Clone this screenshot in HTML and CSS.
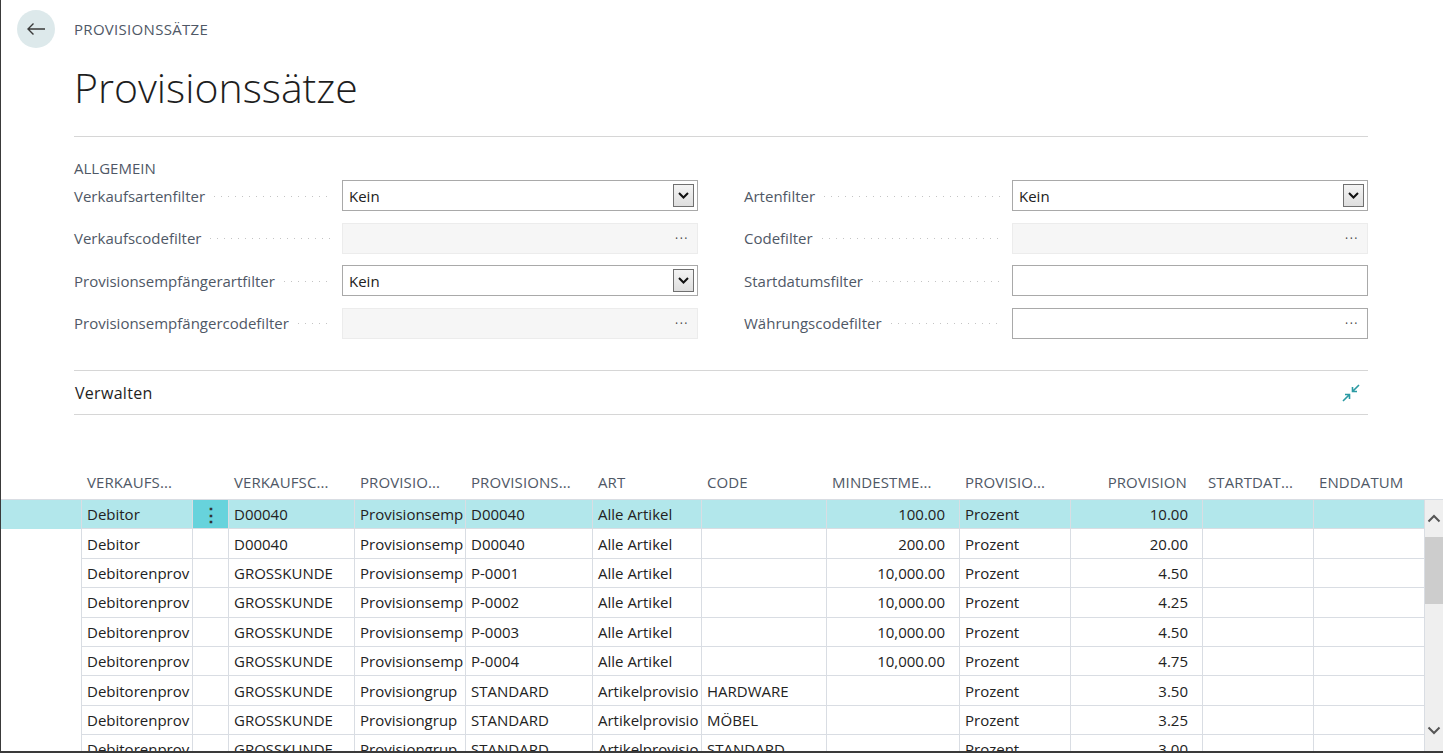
FILE: index.html
```html
<!DOCTYPE html>
<html lang="de">
<head>
<meta charset="utf-8">
<title>Provisionssätze</title>
<link rel="stylesheet" href="styles.css">
</head>
<body>
<div class="app">
  <header class="topbar">
    <button class="back" aria-label="Zurück">
      <svg width="20" height="14" viewBox="0 0 20 14"><path d="M19 7H2M7.5 1.5L2 7l5.5 5.5" fill="none" stroke="#3a3a3a" stroke-width="1.4"/></svg>
    </button>
    <div class="crumb">PROVISIONSSÄTZE</div>
  </header>

  <div class="page">
    <h1 class="title">Provisionssätze</h1>

    <div class="section-title">ALLGEMEIN</div>
    <div class="fields">
      <div class="field">
        <div class="label"><span>Verkaufsartenfilter</span><span class="leader"></span></div>
        <div class="input"><span class="val">Kein</span><span class="dd"><svg width="11" height="7" viewBox="0 0 11 7"><path d="M1 1l4.5 4.5L10 1" fill="none" stroke="#111" stroke-width="2"/></svg></span></div>
      </div>
      <div class="field">
        <div class="label"><span>Artenfilter</span><span class="leader"></span></div>
        <div class="input"><span class="val">Kein</span><span class="dd"><svg width="11" height="7" viewBox="0 0 11 7"><path d="M1 1l4.5 4.5L10 1" fill="none" stroke="#111" stroke-width="2"/></svg></span></div>
      </div>
      <div class="field">
        <div class="label"><span>Verkaufscodefilter</span><span class="leader"></span></div>
        <div class="input disabled"><span class="val"></span><span class="more">···</span></div>
      </div>
      <div class="field">
        <div class="label"><span>Codefilter</span><span class="leader"></span></div>
        <div class="input disabled"><span class="val"></span><span class="more">···</span></div>
      </div>
      <div class="field">
        <div class="label"><span>Provisionsempfängerartfilter</span><span class="leader"></span></div>
        <div class="input"><span class="val">Kein</span><span class="dd"><svg width="11" height="7" viewBox="0 0 11 7"><path d="M1 1l4.5 4.5L10 1" fill="none" stroke="#111" stroke-width="2"/></svg></span></div>
      </div>
      <div class="field">
        <div class="label"><span>Startdatumsfilter</span><span class="leader"></span></div>
        <div class="input"><span class="val"></span></div>
      </div>
      <div class="field">
        <div class="label"><span>Provisionsempfängercodefilter</span><span class="leader"></span></div>
        <div class="input disabled"><span class="val"></span><span class="more">···</span></div>
      </div>
      <div class="field">
        <div class="label"><span>Währungscodefilter</span><span class="leader"></span></div>
        <div class="input"><span class="val"></span><span class="more">···</span></div>
      </div>
    </div>

    <div class="manage">
      <span class="manage-title">Verwalten</span>
      <svg class="collapse" width="20" height="20" viewBox="0 0 20 20"><path d="M2 18L8.5 11.5M4 11.5h4.5V16M18 2l-6.5 6.5M11.5 4v4.5H16" fill="none" stroke="#2b9aa3" stroke-width="1.6"/></svg>
    </div>
  </div>

  <div class="grid">
    <div class="grow head">
      <div class="c sel"></div>
      <div class="c">VERKAUFS...</div>
      <div class="c"></div>
      <div class="c">VERKAUFSC...</div>
      <div class="c">PROVISIO...</div>
      <div class="c">PROVISIONS...</div>
      <div class="c">ART</div>
      <div class="c">CODE</div>
      <div class="c">MINDESTME...</div>
      <div class="c">PROVISIO...</div>
      <div class="c num">PROVISION</div>
      <div class="c">STARTDAT...</div>
      <div class="c">ENDDATUM</div>
    </div>
    <div class="body-wrap">
      <div class="rows">
        <div class="grow row active">
          <div class="c sel"></div><div class="c">Debitor</div><div class="c menu">⋮</div><div class="c">D00040</div><div class="c">Provisionsemp</div><div class="c">D00040</div><div class="c">Alle Artikel</div><div class="c"></div><div class="c num">100.00</div><div class="c">Prozent</div><div class="c num">10.00</div><div class="c"></div><div class="c"></div>
        </div>
        <div class="grow row">
          <div class="c sel"></div><div class="c">Debitor</div><div class="c"></div><div class="c">D00040</div><div class="c">Provisionsemp</div><div class="c">D00040</div><div class="c">Alle Artikel</div><div class="c"></div><div class="c num">200.00</div><div class="c">Prozent</div><div class="c num">20.00</div><div class="c"></div><div class="c"></div>
        </div>
        <div class="grow row">
          <div class="c sel"></div><div class="c">Debitorenprov</div><div class="c"></div><div class="c">GROSSKUNDE</div><div class="c">Provisionsemp</div><div class="c">P-0001</div><div class="c">Alle Artikel</div><div class="c"></div><div class="c num">10,000.00</div><div class="c">Prozent</div><div class="c num">4.50</div><div class="c"></div><div class="c"></div>
        </div>
        <div class="grow row">
          <div class="c sel"></div><div class="c">Debitorenprov</div><div class="c"></div><div class="c">GROSSKUNDE</div><div class="c">Provisionsemp</div><div class="c">P-0002</div><div class="c">Alle Artikel</div><div class="c"></div><div class="c num">10,000.00</div><div class="c">Prozent</div><div class="c num">4.25</div><div class="c"></div><div class="c"></div>
        </div>
        <div class="grow row">
          <div class="c sel"></div><div class="c">Debitorenprov</div><div class="c"></div><div class="c">GROSSKUNDE</div><div class="c">Provisionsemp</div><div class="c">P-0003</div><div class="c">Alle Artikel</div><div class="c"></div><div class="c num">10,000.00</div><div class="c">Prozent</div><div class="c num">4.50</div><div class="c"></div><div class="c"></div>
        </div>
        <div class="grow row">
          <div class="c sel"></div><div class="c">Debitorenprov</div><div class="c"></div><div class="c">GROSSKUNDE</div><div class="c">Provisionsemp</div><div class="c">P-0004</div><div class="c">Alle Artikel</div><div class="c"></div><div class="c num">10,000.00</div><div class="c">Prozent</div><div class="c num">4.75</div><div class="c"></div><div class="c"></div>
        </div>
        <div class="grow row">
          <div class="c sel"></div><div class="c">Debitorenprov</div><div class="c"></div><div class="c">GROSSKUNDE</div><div class="c">Provisiongrup</div><div class="c">STANDARD</div><div class="c">Artikelprovisio</div><div class="c">HARDWARE</div><div class="c num"></div><div class="c">Prozent</div><div class="c num">3.50</div><div class="c"></div><div class="c"></div>
        </div>
        <div class="grow row">
          <div class="c sel"></div><div class="c">Debitorenprov</div><div class="c"></div><div class="c">GROSSKUNDE</div><div class="c">Provisiongrup</div><div class="c">STANDARD</div><div class="c">Artikelprovisio</div><div class="c">MÖBEL</div><div class="c num"></div><div class="c">Prozent</div><div class="c num">3.25</div><div class="c"></div><div class="c"></div>
        </div>
        <div class="grow row">
          <div class="c sel"></div><div class="c">Debitorenprov</div><div class="c"></div><div class="c">GROSSKUNDE</div><div class="c">Provisiongrup</div><div class="c">STANDARD</div><div class="c">Artikelprovisio</div><div class="c">STANDARD</div><div class="c num"></div><div class="c">Prozent</div><div class="c num">3.00</div><div class="c"></div><div class="c"></div>
        </div>
      </div>
      <div class="scrollbar">
        <div class="sb-btn up"><svg width="14" height="9" viewBox="0 0 14 9"><path d="M1.5 7.5L7 2l5.5 5.5" fill="none" stroke="#555" stroke-width="2"/></svg></div>
        <div class="sb-thumb"></div>
        <div class="sb-track"></div>
        <div class="sb-btn down"><svg width="14" height="9" viewBox="0 0 14 9"><path d="M1.5 1.5L7 7l5.5-5.5" fill="none" stroke="#555" stroke-width="2"/></svg></div>
      </div>
    </div>
  </div>
</div>
</body>
</html>
```

FILE: styles.css
```css
* { box-sizing: border-box; }
html, body { margin: 0; padding: 0; }
body {
  font-family: "Open Sans", "Noto Sans", sans-serif;
  color: #212121;
  background: #fff;
  overflow: hidden;
}
.app {
  width: 1443px;
  height: 753px;
  border-left: 1px solid #3a3a3a;
  border-bottom: 2px solid #3a3a3a;
  display: flex;
  flex-direction: column;
  overflow: hidden;
}
.topbar {
  height: 58px;
  display: flex;
  align-items: center;
  padding-left: 16px;
  flex: none;
}
.back {
  width: 38px;
  height: 38px;
  border-radius: 50%;
  border: none;
  background: #dde9eb;
  display: flex;
  align-items: center;
  justify-content: center;
  padding: 0;
  margin-right: 19px;
}
.crumb {
  font-size: 15px;
  letter-spacing: 0.3px;
  color: #4f5866;
}
.page {
  padding: 0 75px 0 73px;
  flex: none;
}
.title {
  margin: 4px 0 0;
  font-size: 41px;
  font-weight: 300;
  line-height: 50px;
  padding-bottom: 24px;
  border-bottom: 1px solid #d6d6d6;
  color: #1e1e1e;
}
.section-title {
  margin-top: 21px;
  font-size: 15px;
  line-height: 20px;
  color: #4f5866;
}
.fields {
  margin-top: 2px;
  display: grid;
  grid-template-columns: 1fr 1fr;
  column-gap: 46px;
  row-gap: 11.5px;
}
.field {
  display: grid;
  grid-template-columns: 1fr 356px;
  height: 31px;
  align-items: center;
}
.label {
  display: flex;
  align-items: center;
  font-size: 15px;
  color: #4f5866;
  white-space: nowrap;
}
.leader {
  flex: 1;
  height: 1px;
  margin: 1px 10px 0 9px;
  background: linear-gradient(to right, #c4c4c4 1px, transparent 1px) 0 0 / 7px 1px repeat-x;
}
.input {
  height: 31px;
  border: 1px solid #a9a9a9;
  background: #fff;
  display: flex;
  align-items: center;
  padding: 0 3px 0 6px;
  font-size: 15px;
}
.input .val { flex: 1; }
.input.disabled {
  border-color: #ececec;
  background: #f6f6f6;
}
.dd {
  width: 21px;
  height: 23px;
  border: 1px solid #707070;
  background: linear-gradient(#f4f4f4, #dedede);
  display: flex;
  align-items: center;
  justify-content: center;
}
.more {
  font-size: 12px;
  color: #444;
  padding-right: 5px;
  letter-spacing: 1.5px;
}
.manage {
  margin-top: 31.5px;
  height: 45px;
  border-top: 1px solid #d6d6d6;
  border-bottom: 1px solid #d6d6d6;
  display: flex;
  align-items: center;
  justify-content: space-between;
  padding: 0 7px 0 1px;
}
.manage-title {
  font-size: 16px;
  letter-spacing: 0.3px;
  color: #1e1e1e;
}
.grid {
  margin-top: 50px;
  flex: 1;
  display: flex;
  flex-direction: column;
  min-height: 0;
}
.grow {
  display: grid;
  grid-template-columns: 80px 111px 36px 126px 111px 127px 109px 125px 133px 111px 132px 111px 112px;
}
.head {
  height: 34px;
  width: 1424px;
  flex: none;
}
.head .c {
  display: flex;
  align-items: center;
  padding: 0 6px;
  font-size: 15px;
  letter-spacing: 0.1px;
  color: #4f5866;
  white-space: nowrap;
  overflow: hidden;
}
.head .c.num { justify-content: flex-end; padding-right: 15px; }
.body-wrap {
  flex: 1;
  display: flex;
  border-top: 1px solid #d9dde3;
  min-height: 0;
}
.rows {
  width: 1424px;
  flex: none;
}
.row {
  height: 29.4px;
}
.row .c {
  display: flex;
  align-items: center;
  padding: 0 5px;
  font-size: 15px;
  white-space: nowrap;
  overflow: hidden;
  border-left: 1px solid #d9dde3;
  border-bottom: 1px solid #d9dde3;
  color: #222;
}
.row .c.sel { border-left: none; border-bottom: none; }
.row .c:last-child { border-right: 1px solid #d9dde3; }
.row .c.num { justify-content: flex-end; padding-right: 14px; }
.row.active { background: #b2e7eb; }
.row.active .c.menu {
  background: #67d3dc;
  justify-content: center;
  font-size: 18px;
  font-weight: 700;
  color: #333;
}
.scrollbar {
  width: 18px;
  flex: none;
  background: #efefef;
  display: flex;
  flex-direction: column;
}
.sb-btn {
  display: flex;
  align-items: center;
  justify-content: center;
  flex: none;
}
.sb-btn.up { height: 37px; }
.sb-btn.down { height: 42px; }
.sb-thumb { height: 67px; background: #cdcdcd; flex: none; }
.sb-track { flex: 1; }
```
